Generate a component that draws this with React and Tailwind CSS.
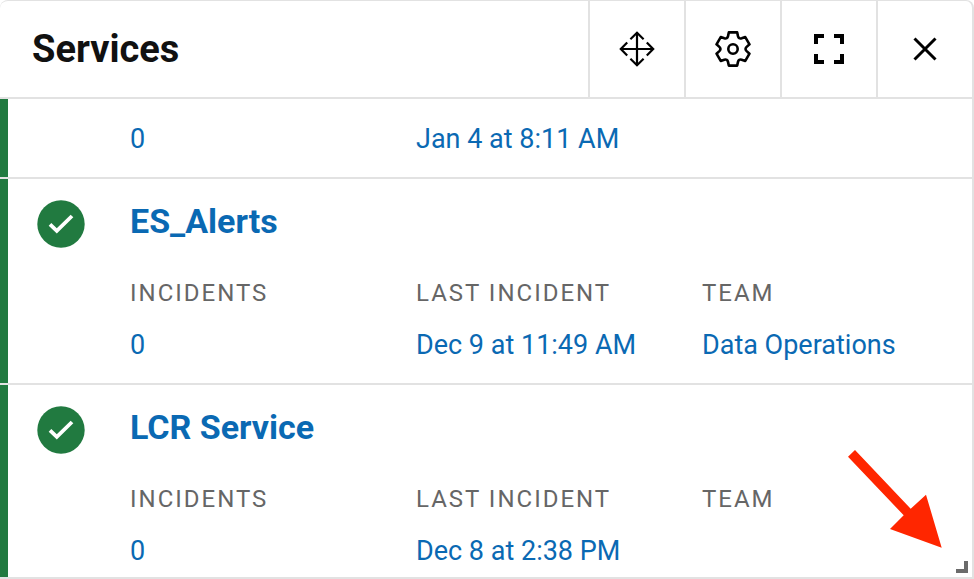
const services = [
  {
    name: "ES_Alerts",
    incidents: "0",
    lastIncident: "Dec 9 at 11:49 AM",
    team: "Data Operations",
  },
  {
    name: "LCR Service",
    incidents: "0",
    lastIncident: "Dec 8 at 2:38 PM",
    team: "",
  },
];

function MoveIcon() {
  return (
    <svg className="w-9 h-9" viewBox="-18 -18 36 36" fill="none" stroke="currentColor" strokeWidth="2.2">
      <path d="M0-16V16M-16 0H16" />
      <path d="M-6.6-9.8 0-16.2 6.6-9.8M-6.6 9.8 0 16.2 6.6 9.8M-9.8-6.6-16.2 0-9.8 6.6M9.8-6.6 16.2 0 9.8 6.6" />
    </svg>
  );
}

function GearIcon() {
  return (
    <svg className="w-9 h-9" viewBox="-18 -18 36 36" fill="none" stroke="currentColor" strokeWidth="2.6" strokeLinejoin="round">
      <path d="M-4.2-16.6H4.2L4.99-12.87Q5.7-9.87 8.65-10.75L12.27-11.94 16.47-4.66 13.64-2.11Q11.4 0 13.64 2.11L16.47 4.66 12.27 11.94 8.65 10.75Q5.7 9.87 4.99 12.87L4.2 16.6H-4.2L-4.99 12.87Q-5.7 9.87-8.65 10.75L-12.27 11.94-16.47 4.66-13.64 2.11Q-11.4 0-13.64-2.11L-16.47-4.66-12.27-11.94-8.65-10.75Q-5.7-9.87-4.99-12.87Z" />
      <circle r="4.7" />
    </svg>
  );
}

function FullscreenIcon() {
  return (
    <svg className="w-9 h-9" viewBox="-18 -18 36 36" fill="none" stroke="currentColor" strokeWidth="4">
      <path d="M-13-5V-13H-5M5-13H13V-5M13 5V13H5M-5 13H-13V5" />
    </svg>
  );
}

function CloseIcon() {
  return (
    <svg className="w-9 h-9" viewBox="-18 -18 36 36" fill="none" stroke="currentColor" strokeWidth="3">
      <path d="M-10.5-10.5 10.5 10.5M10.5-10.5-10.5 10.5" />
    </svg>
  );
}

function StatusIcon() {
  return (
    <svg className="w-12 h-12" viewBox="0 0 48 48" role="img" aria-label="OK">
      <circle cx="24" cy="24" r="23.7" fill="#217a40" />
      <path d="M13 24.4 19.8 30.8 35 16" fill="none" stroke="#fff" strokeWidth="3.8" />
    </svg>
  );
}

const actions = [
  { label: "Move", Icon: MoveIcon },
  { label: "Settings", Icon: GearIcon },
  { label: "Full screen", Icon: FullscreenIcon },
  { label: "Close", Icon: CloseIcon },
];

function Field({ label, value }) {
  return (
    <div className="flex flex-col gap-5">
      <dt className="text-2xl leading-7 tracking-[2px] uppercase text-[#666666]">{label}</dt>
      <dd className="text-[27px] leading-9">
        {value && <a href="#">{value}</a>}
      </dd>
    </div>
  );
}

function ServiceRow({ service }) {
  return (
    <li className="flex pt-[21px] pb-5 last:pb-2 border-l-8 border-[#217a40]">
      <div className="w-[122px] shrink-0 pl-[29px]">
        <StatusIcon />
      </div>
      <div className="grow pt-[3px]">
        <h2 className="text-[34px] leading-9 font-bold mb-10">
          <a href="#">{service.name}</a>
        </h2>
        <dl className="grid grid-cols-3 gap-4 whitespace-nowrap">
          <Field label="Incidents" value={service.incidents} />
          <Field label="Last Incident" value={service.lastIncident} />
          <Field label="Team" value={service.team} />
        </dl>
      </div>
    </li>
  );
}

export default function App() {
  return (
    <section className="relative bg-white border-t border-r-2 border-b-2 border-[#e2e2e2] rounded-t-lg font-['Roboto',sans-serif] text-[#0a69b3]">
      {/* Header */}
      <header className="flex items-stretch h-[98px] border-b-2 border-[#e2e2e2]">
        <h1 className="grow self-center pl-8 text-[38px] leading-12 font-bold text-[#111111]">Services</h1>
        {actions.map(({ label, Icon }) => (
          <button
            key={label}
            type="button"
            aria-label={label}
            className="w-24 flex items-center justify-center border-l-2 border-[#e2e2e2] text-black"
          >
            <Icon />
          </button>
        ))}
      </header>

      {/* Service list */}
      <ul className="flex flex-col gap-[2px] bg-[#e2e2e2] *:bg-white">
        <li className="grid grid-cols-3 gap-4 pt-[22px] pb-5 pl-[122px] border-l-8 border-[#217a40] text-[27px] leading-9 whitespace-nowrap">
          <a href="#">0</a>
          <a href="#">Jan 4 at 8:11 AM</a>
        </li>
        {services.map((service) => (
          <ServiceRow key={service.name} service={service} />
        ))}
      </ul>

      {/* Resize handle and the pointer to it */}
      <div className="absolute right-1 bottom-1 w-3 h-3">
        <svg viewBox="0 0 12 12" fill="#6b6b6b">
          <path d="M8 0H12V12H0V8H8Z" />
        </svg>
      </div>
      <svg className="absolute right-[30px] bottom-[29px] w-[94px] h-[98px]" viewBox="0 0 94 98" fill="#ff2600">
        <path d="M7 0 62.7 58.7 78 44.7 93.7 97.7 42 79 55.7 65.3 0 6.7Z" />
      </svg>
    </section>
  );
}
